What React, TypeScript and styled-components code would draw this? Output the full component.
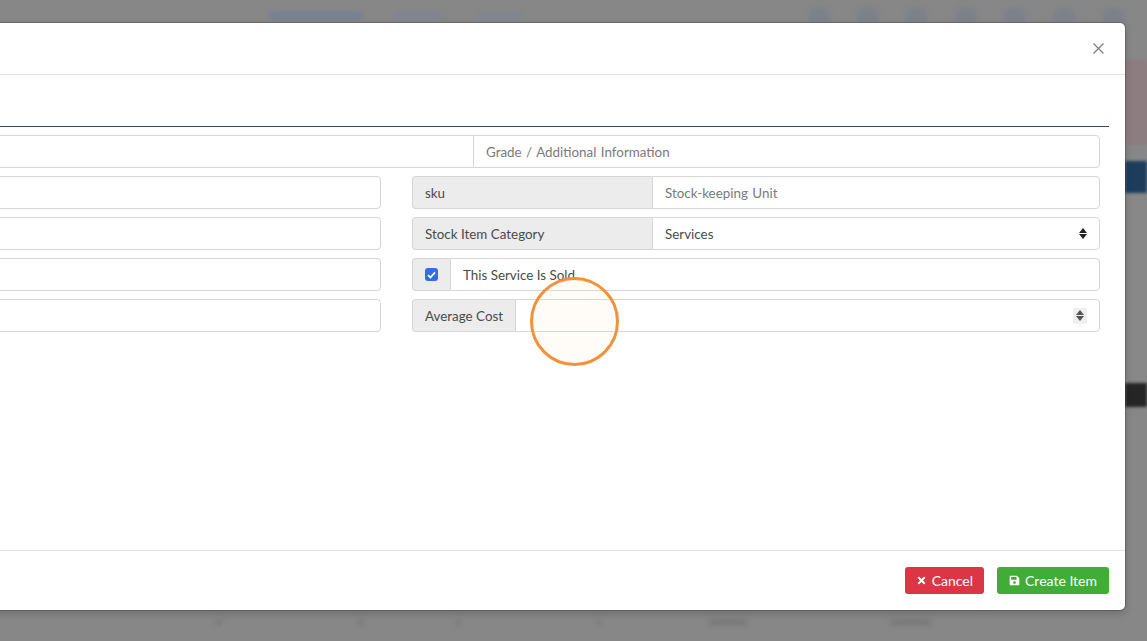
import styled, { createGlobalStyle } from "styled-components";
import { FaSave, FaTimes } from "react-icons/fa";

const GlobalStyle = createGlobalStyle`
  html, body {
    margin: 0;
    padding: 0;
    overflow: hidden;
  }
  body {
    font-family: "Lato", "Noto Sans", sans-serif;
    color: #495057;
  }
  * {
    box-sizing: border-box;
  }
`;

// Page behind the modal (dimmed by the backdrop)
const Page = styled.div`
  position: relative;
  width: 1147px;
  height: 641px;
  overflow: hidden;
  background: #878787;
  display: flex;
  flex-direction: column;
`;

const TopBar = styled.div`
  height: 30px;
  display: flex;
  align-items: center;
  padding: 0 23px 0 269px;
  gap: 32px;
  filter: blur(2.5px);
`;

const BlurText = styled.span<{ $w: number; $c?: string }>`
  display: block;
  width: ${(p) => p.$w}px;
  height: 7px;
  border-radius: 3px;
  background: ${(p) => p.$c ?? "#7d8493"};
`;

const NavIcons = styled.div`
  margin-left: auto;
  display: flex;
  gap: 27px;
`;

const NavIcon = styled.span`
  width: 22px;
  height: 16px;
  border-radius: 50% 50% 4px 4px;
  background: #7c8189;
`;

const PageBody = styled.div`
  flex: 1;
  display: flex;
`;

const PageMain = styled.div`
  flex: 1;
  display: flex;
  flex-direction: column;
  justify-content: flex-end;
`;

const TableRow = styled.div`
  height: 34px;
  display: flex;
  align-items: center;
  padding: 0 0 4px 216px;
  filter: blur(2px);
`;

const Cell = styled.div<{ $w: number }>`
  width: ${(p) => p.$w}px;
  display: flex;
`;

const SideStrip = styled.div`
  width: 22px;
  display: flex;
  flex-direction: column;
  filter: blur(1.5px);
`;

const Band = styled.div<{ $h: number; $c: string }>`
  height: ${(p) => p.$h}px;
  background: ${(p) => p.$c};
`;

// Modal
const Modal = styled.div`
  position: absolute;
  top: 23px;
  left: -331px;
  width: 1456px;
  height: 587px;
  background: #fff;
  border-radius: 5px;
  box-shadow: 0 0 0 1px rgba(0, 0, 0, 0.18), 0 3px 9px rgba(0, 0, 0, 0.2);
  display: flex;
  flex-direction: column;
`;

const ModalHeader = styled.div`
  height: 52px;
  border-bottom: 1px solid #e3e3e3;
  display: flex;
  align-items: center;
  justify-content: flex-end;
  padding: 0 20px;
`;

const CloseButton = styled.button`
  border: none;
  background: transparent;
  padding: 0;
  width: 14px;
  height: 14px;
  display: flex;
  align-items: center;
  justify-content: center;
  cursor: pointer;
`;

const ModalBody = styled.div`
  flex: 1;
  padding: 16px 16px;
  display: flex;
  flex-direction: column;
`;

const TabLine = styled.div`
  height: 36px;
  border-bottom: 1px solid #34495e;
  margin-bottom: 8px;
`;

const Form = styled.div`
  padding: 0 9px;
  display: flex;
  flex-direction: column;
  gap: 8px;
`;

const FullRow = styled.div`
  display: grid;
  grid-template-columns: 779px 1fr;
`;

const Columns = styled.div`
  display: grid;
  grid-template-columns: 687px 1fr;
  column-gap: 31px;
`;

const Column = styled.div`
  display: flex;
  flex-direction: column;
  gap: 8px;
`;

const InputGroup = styled.div`
  display: flex;
  height: 33px;
`;

const Addon = styled.div<{ $w?: number }>`
  ${(p) => (p.$w ? `width: ${p.$w}px;` : "")}
  flex-shrink: 0;
  display: flex;
  align-items: center;
  padding: 0 12px;
  background: #ececec;
  border: 1px solid #d6d6d6;
  border-right: none;
  border-radius: 4px 0 0 4px;
  font-size: 13.4px;
  color: #4a4a4a;
`;

const Field = styled.div<{ $first?: boolean; $last?: boolean }>`
  flex: 1;
  display: flex;
  align-items: center;
  padding: 0 12px;
  background: #fff;
  border: 1px solid #d6d6d6;
  border-radius: ${(p) =>
    p.$first && p.$last
      ? "4px"
      : p.$first
      ? "4px 0 0 4px"
      : p.$last
      ? "0 4px 4px 0"
      : "0"};
  ${(p) => (!p.$last ? "border-right: none;" : "")}
  font-size: 13.4px;
  color: #4a4a4a;
`;

const Placeholder = styled.span`
  color: #7a7a7a;
  word-spacing: 1px;
`;

const Value = styled.span`
  flex: 1;
`;

const Check = styled.span`
  width: 13px;
  height: 13px;
  border-radius: 3px;
  background: #2f6fe0;
  display: flex;
  align-items: center;
  justify-content: center;
`;

const SelectArrows = styled.span`
  display: flex;
  flex-direction: column;
  gap: 1px;
`;

const Spinner = styled.span`
  width: 14px;
  height: 16px;
  background: #efefef;
  border-radius: 2px;
  display: flex;
  flex-direction: column;
  align-items: center;
  justify-content: center;
  gap: 1px;
`;

const ModalFooter = styled.div`
  height: 60px;
  border-top: 1px solid #e3e3e3;
  display: flex;
  align-items: center;
  justify-content: flex-end;
  gap: 13px;
  padding: 0 16px 0 0;
`;

const Button = styled.button<{ $variant: "danger" | "success" }>`
  height: 27px;
  border: none;
  border-radius: 3px;
  padding: 0 ${(p) => (p.$variant === "danger" ? "11px" : "12px")};
  display: flex;
  align-items: center;
  gap: 5px;
  font-family: inherit;
  font-size: 14px;
  color: #fff;
  background: ${(p) => (p.$variant === "danger" ? "#dc3545" : "#40ad36")};
  cursor: pointer;

  svg {
    font-size: 11px;
  }
`;

const ClickMarker = styled.div`
  position: absolute;
  left: 530px;
  top: 277px;
  width: 89px;
  height: 89px;
  border-radius: 50%;
  border: 3px solid #f3923a;
  background: rgba(255, 220, 185, 0.12);
  pointer-events: none;
`;

const Triangle = ({ up, color = "#222" }: { up?: boolean; color?: string }) => (
  <svg width="8" height="5" viewBox="0 0 8 5">
    <path d={up ? "M0 5 L4 0 L8 5 Z" : "M0 0 L8 0 L4 5 Z"} fill={color} />
  </svg>
);

const tableCells = [
  { w: 142, t: 6 },
  { w: 98, t: 6 },
  { w: 141, t: 5 },
  { w: 111, t: 4 },
  { w: 182, t: 40 },
  { w: 60, t: 42 },
];

function App() {
  return (
    <>
      <GlobalStyle />
      <Page>
        <TopBar>
          <BlurText $w={94} $c="#737f93" />
          <BlurText $w={49} />
          <BlurText $w={48} $c="#7f8691" />
          <NavIcons>
            {Array.from({ length: 7 }).map((_, i) => (
              <NavIcon key={i} />
            ))}
          </NavIcons>
        </TopBar>
        <PageBody>
          <PageMain>
            <TableRow>
              {tableCells.map((c, i) => (
                <Cell key={i} $w={c.w}>
                  <BlurText $w={c.t} $c="#7b7b7b" />
                </Cell>
              ))}
            </TableRow>
          </PageMain>
          <SideStrip>
            <Band $h={30} $c="#878787" />
            <Band $h={85} $c="#8e7d80" />
            <Band $h={16} $c="#878787" />
            <Band $h={32} $c="#1e3d5d" />
            <Band $h={190} $c="#888888" />
            <Band $h={24} $c="#252525" />
          </SideStrip>
        </PageBody>

        <Modal>
          <ModalHeader>
            <CloseButton aria-label="Close">
              <svg width="11" height="11" viewBox="0 0 11 11">
                <path d="M0.5 0.5 L10.5 10.5 M10.5 0.5 L0.5 10.5" stroke="#7d7d7d" strokeWidth="1.2" />
              </svg>
            </CloseButton>
          </ModalHeader>
          <ModalBody>
            <TabLine />
            <Form>
              <FullRow>
                <InputGroup>
                  <Field $first />
                </InputGroup>
                <InputGroup>
                  <Field $last>
                    <Placeholder>Grade / Additional Information</Placeholder>
                  </Field>
                </InputGroup>
              </FullRow>
              <Columns>
                <Column>
                  <InputGroup>
                    <Field $first $last />
                  </InputGroup>
                  <InputGroup>
                    <Field $first $last />
                  </InputGroup>
                  <InputGroup>
                    <Field $first $last />
                  </InputGroup>
                  <InputGroup>
                    <Field $first $last />
                  </InputGroup>
                </Column>
                <Column>
                  <InputGroup>
                    <Addon $w={240}>sku</Addon>
                    <Field $last>
                      <Placeholder>Stock-keeping Unit</Placeholder>
                    </Field>
                  </InputGroup>
                  <InputGroup>
                    <Addon $w={240}>Stock Item Category</Addon>
                    <Field $last>
                      <Value>Services</Value>
                      <SelectArrows>
                        <Triangle up />
                        <Triangle />
                      </SelectArrows>
                    </Field>
                  </InputGroup>
                  <InputGroup>
                    <Addon $w={38}>
                      <Check>
                        <svg width="9" height="8" viewBox="0 0 9 8">
                          <path d="M1 4.2 L3.4 6.5 L8 1.3" stroke="#fff" strokeWidth="1.8" fill="none" />
                        </svg>
                      </Check>
                    </Addon>
                    <Field $last>This Service Is Sold</Field>
                  </InputGroup>
                  <InputGroup>
                    <Addon>Average Cost</Addon>
                    <Field $last>
                      <Value />
                      <Spinner>
                        <Triangle up color="#555" />
                        <Triangle color="#555" />
                      </Spinner>
                    </Field>
                  </InputGroup>
                </Column>
              </Columns>
            </Form>
          </ModalBody>
          <ModalFooter>
            <Button $variant="danger">
              <FaTimes />
              Cancel
            </Button>
            <Button $variant="success">
              <FaSave />
              Create Item
            </Button>
          </ModalFooter>
        </Modal>
        <ClickMarker />
      </Page>
    </>
  );
}

export default App;
